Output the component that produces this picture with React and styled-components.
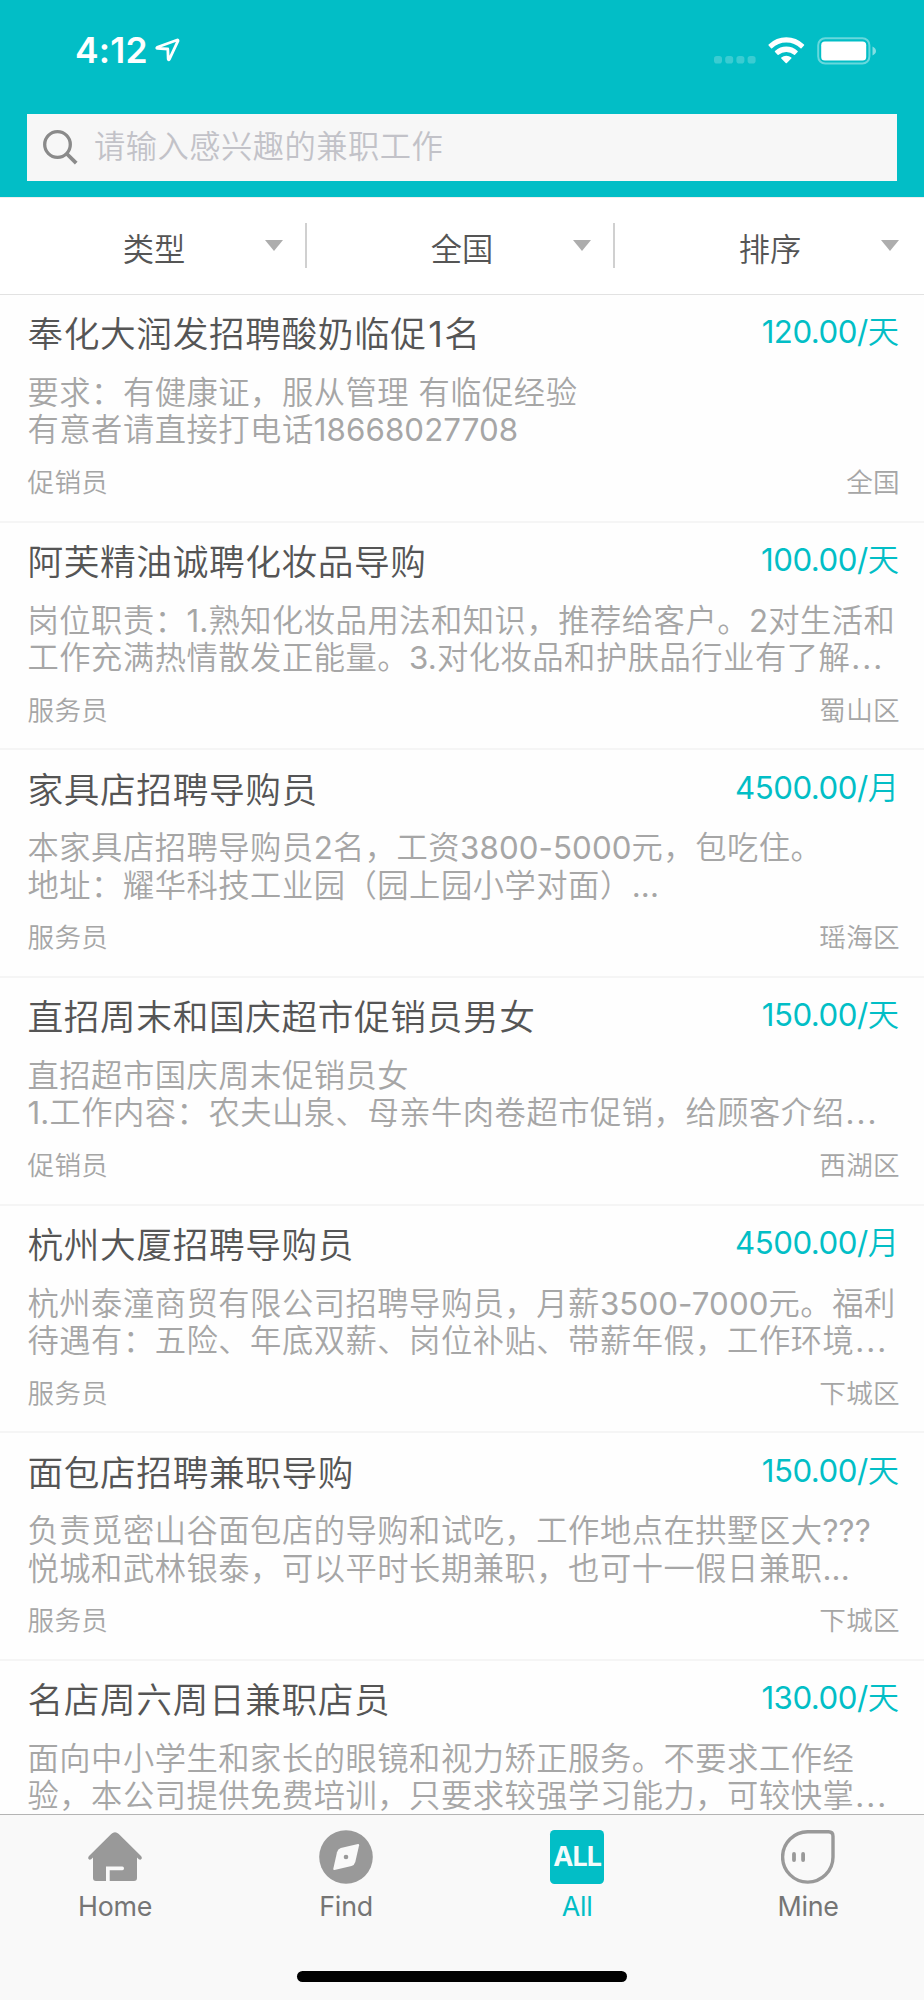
import React from "react";
import styled, { createGlobalStyle, ThemeProvider } from "styled-components";

const theme = {
  color: {
    primary: "#02bec6",
    title: "#555555",
    text: "#a6a6a6",
    tab: "#757575",
    placeholder: "#c2c2c8",
  },
};

const filters = ["类型", "全国", "排序"];

const jobs = [
  {
    title: "奉化大润发招聘酸奶临促1名",
    price: "120.00/天",
    lines: ["要求：有健康证，服从管理 有临促经验", "有意者请直接打电话18668027708"],
    type: "促销员",
    area: "全国",
  },
  {
    title: "阿芙精油诚聘化妆品导购",
    price: "100.00/天",
    lines: [
      "岗位职责：1.熟知化妆品用法和知识，推荐给客户。2对生活和",
      "工作充满热情散发正能量。3.对化妆品和护肤品行业有了解…",
    ],
    type: "服务员",
    area: "蜀山区",
  },
  {
    title: "家具店招聘导购员",
    price: "4500.00/月",
    lines: [
      "本家具店招聘导购员2名，工资3800-5000元，包吃住。",
      "地址：耀华科技工业园（园上园小学对面）...",
    ],
    type: "服务员",
    area: "瑶海区",
  },
  {
    title: "直招周末和国庆超市促销员男女",
    price: "150.00/天",
    lines: [
      "直招超市国庆周末促销员女",
      "1.工作内容：农夫山泉、母亲牛肉卷超市促销，给顾客介绍…",
    ],
    type: "促销员",
    area: "西湖区",
  },
  {
    title: "杭州大厦招聘导购员",
    price: "4500.00/月",
    lines: [
      "杭州泰潼商贸有限公司招聘导购员，月薪3500-7000元。福利",
      "待遇有：五险、年底双薪、岗位补贴、带薪年假，工作环境…",
    ],
    type: "服务员",
    area: "下城区",
  },
  {
    title: "面包店招聘兼职导购",
    price: "150.00/天",
    lines: [
      "负责觅密山谷面包店的导购和试吃，工作地点在拱墅区大???",
      "悦城和武林银泰，可以平时长期兼职，也可十一假日兼职...",
    ],
    type: "服务员",
    area: "下城区",
  },
  {
    title: "名店周六周日兼职店员",
    price: "130.00/天",
    lines: [
      "面向中小学生和家长的眼镜和视力矫正服务。不要求工作经",
      "验，本公司提供免费培训，只要求较强学习能力，可较快掌…",
    ],
  },
];

// latin runs are spaced differently from the chinese text around them
const Mixed = ({ children }) =>
  children.split(/([0-9.?/-]+|…)/).map((part, i) => {
    if (part === "…") return <Ellipsis key={i}>...</Ellipsis>;
    return i % 2 ? <Latin key={i}>{part}</Latin> : part;
  });

const LocationIcon = () => (
  <svg width="25" height="26" viewBox="0 -1 25 26">
    <path
      d="M22.2 2 L2.2 9.3 Q1.2 10 2.4 10.4 L12.8 11 L13.2 21.2 Q13.6 22.6 14.3 21.3 L23 2.9 Q23.2 1.7 22.2 2 Z"
      fill="none"
      stroke="#fff"
      strokeWidth="2.8"
      strokeLinejoin="round"
    />
  </svg>
);

const SignalDots = () => (
  <svg width="42" height="8" viewBox="0 0 42 8" fill="#fff" opacity="0.22">
    <rect x="0" width="8" height="7.5" rx="2.8" />
    <rect x="11.2" width="8" height="7.5" rx="2.8" />
    <rect x="22.4" width="8" height="7.5" rx="2.8" />
    <rect x="33.6" width="8" height="7.5" rx="2.8" />
  </svg>
);

const WifiIcon = () => (
  <svg width="37" height="27" viewBox="0 0 37 27" fill="#fff">
    <path d="M.6 7.5 Q8.2 .3 18.3 .3 Q28.4 .3 36 7.5 Q36.5 8 36 8.5 L33.5 11.2 Q33 11.6 32.5 11.2 Q26.5 5.6 18.3 5.6 Q10.1 5.6 4.1 11.2 Q3.6 11.6 3.1 11.2 L.6 8.5 Q.1 8 .6 7.5 Z" />
    <path d="M7 14 Q12 9.6 18.3 9.6 Q24.6 9.6 29.6 14 Q30.1 14.5 29.6 15 L27 17.7 Q26.5 18.2 26 17.7 Q22.7 14.9 18.3 14.9 Q13.9 14.9 10.6 17.7 Q10.1 18.2 9.6 17.7 L7 15 Q6.5 14.5 7 14 Z" />
    <path d="M13.3 20.5 Q15.5 18.8 18.3 18.8 Q21.1 18.8 23.3 20.5 Q23.8 21 23.3 21.5 L18.9 26 Q18.3 26.6 17.7 26 L13.3 21.5 Q12.8 21 13.3 20.5 Z" />
  </svg>
);

const BatteryIcon = () => (
  <svg width="60" height="28" viewBox="0 0 60 28">
    <rect x="1.2" y="1.2" width="51.2" height="25.3" rx="7" fill="none" stroke="#fff" strokeOpacity="0.4" strokeWidth="2" />
    <rect x="4.2" y="4.6" width="45" height="19" rx="3.6" fill="#fff" />
    <path d="M55.5 9.4 Q59 11 59 14 Q59 17 55.5 18.4 Z" fill="#fff" fillOpacity="0.5" />
  </svg>
);

const SearchIcon = () => (
  <svg width="35" height="35" viewBox="0 0 35 35" fill="none" stroke="#8a8a8a">
    <circle cx="14.5" cy="14.5" r="12.8" strokeWidth="3.3" />
    <path d="M24 24 L33.2 33.2" strokeWidth="3.8" />
  </svg>
);

const HomeIcon = () => (
  <svg width="54" height="54" viewBox="0 0 54 54">
    <path
      d="M23.2 3.9 Q27 .8 30.8 3.9 L53 26 Q54.4 27.8 53.4 29 Q52.4 30.2 50.8 29.2 L49 27.6 V48 Q49 51 46 51 H21.7 V40.2 H34.4 Q36 40.2 36 38.4 Q36 36.6 34.4 36.6 H18 V51 H8 Q5 51 5 48 V27.6 L3.2 29.2 Q1.6 30.2 .6 29 Q-.4 27.8 1 26 Z"
      fill="#999"
    />
  </svg>
);

const FindIcon = () => (
  <svg width="54" height="54" viewBox="0 0 54 54">
    <circle cx="27" cy="27" r="26.8" fill="#999" />
    <path
      d="M39 14.1 Q40.3 14 40.1 15.3 L36.3 32 Q35.5 35 32.5 36 L15.5 40 Q14 40.2 14.3 38.8 L18 22.3 Q18.8 19 21.8 18 Z"
      fill="#f9f9f9"
    />
    <circle cx="27" cy="27" r="2.3" fill="#999" />
  </svg>
);

const MineIcon = () => (
  <svg width="54" height="54" viewBox="0 0 54 54" fill="none" stroke="#999">
    <path d="M27 1.7 H47.5 Q52 1.7 52 6.2 V27 A25.2 25.2 0 1 1 27 1.7 Z" strokeWidth="3.4" />
    <path d="M13 24 V30 M22.1 24 V30" strokeWidth="3.8" strokeLinecap="round" />
  </svg>
);

const App = () => (
  <ThemeProvider theme={theme}>
    <GlobalStyle />
    <Screen>
      <Header>
        <StatusBar>
          <Time>4:12</Time>
          <LocationIcon />
          <StatusIcons>
            <DotsWrapper>
              <SignalDots />
            </DotsWrapper>
            <WifiIcon />
            <BatteryIcon />
          </StatusIcons>
        </StatusBar>
        <SearchBox>
          <SearchIcon />
          <Placeholder>请输入感兴趣的兼职工作</Placeholder>
        </SearchBox>
      </Header>
      <FilterBar>
        {filters.map(name => (
          <Filter key={name}>
            <span>{name}</span>
            <Arrow />
          </Filter>
        ))}
      </FilterBar>
      <JobList>
        {jobs.map(job => (
          <Job key={job.title}>
            <JobHead>
              <Title><Mixed>{job.title}</Mixed></Title>
              <Price><Mixed>{job.price}</Mixed></Price>
            </JobHead>
            <Description>
              {job.lines.map(line => (
                <p key={line}><Mixed>{line}</Mixed></p>
              ))}
            </Description>
            {job.type && (
              <JobFoot>
                <span>{job.type}</span>
                <span>{job.area}</span>
              </JobFoot>
            )}
          </Job>
        ))}
      </JobList>
      <TabBar>
        <Tabs>
          <Tab>
            <HomeIcon />
            <TabLabel>Home</TabLabel>
          </Tab>
          <Tab>
            <FindIcon />
            <TabLabel>Find</TabLabel>
          </Tab>
          <Tab $active>
            <AllBadge>ALL</AllBadge>
            <TabLabel>All</TabLabel>
          </Tab>
          <Tab>
            <MineIcon />
            <TabLabel>Mine</TabLabel>
          </Tab>
        </Tabs>
        <HomeIndicator />
      </TabBar>
    </Screen>
  </ThemeProvider>
)

const GlobalStyle = createGlobalStyle`
  * {
    box-sizing: border-box;
  }
  body {
    margin: 0;
    font-family: Inter, "Noto Sans CJK SC", sans-serif;
    font-weight: 350;
    background-color: #fff;
  }
  p {
    margin: 0;
  }
  svg {
    display: block;
    flex-shrink: 0;
  }
`

const Screen = styled.div`
  width: 924px;
  height: 2000px;
  display: flex;
  flex-direction: column;
  overflow: hidden;
  background-color: #fefefe;
`

const Latin = styled.span`
  font-weight: 400;
  letter-spacing: 0.1px;
`

const Ellipsis = styled.span`
  margin-left: 1px;
  font-weight: 400;
  letter-spacing: 2px;
`

const Header = styled.header`
  height: 197px;
  flex-shrink: 0;
  background-color: ${props => props.theme.color.primary};
`

const StatusBar = styled.div`
  height: 114px;
  padding: 37px 47px 0 75px;
  display: flex;
  align-items: flex-start;
  color: #fff;
`

const Time = styled.span`
  width: 80px;
  font-size: 35.5px;
  font-weight: 600;
  line-height: 28px;
  letter-spacing: 0.2px;
`

const StatusIcons = styled.div`
  margin-left: auto;
  display: flex;
`

const DotsWrapper = styled.div`
  padding: 19px 12px 0 0;
  & + svg {
    margin-right: 12px;
  }
`

const SearchBox = styled.div`
  height: 67px;
  margin: 0 27px;
  padding: 0 16px;
  display: flex;
  align-items: center;
  background-color: #f7f7f7;
`

const Placeholder = styled.span`
  margin-left: 16px;
  font-size: 31.25px;
  letter-spacing: 0.5px;
  line-height: 40px;
  padding-bottom: 2px;
  color: ${props => props.theme.color.placeholder};
`

const FilterBar = styled.nav`
  height: 98px;
  flex-shrink: 0;
  display: grid;
  grid-template-columns: repeat(3, 1fr);
  border-top: 1px solid #eeeeee;
  border-bottom: 1px solid #e2e2e2;
  background-color: #fff;
`

const Filter = styled.div`
  height: 45px;
  margin: 25px 1px 0 0;
  padding-left: 3px;
  display: grid;
  grid-template-columns: 1fr auto 1fr;
  grid-template-rows: 45px;
  align-items: center;
  font-size: 31.25px;
  line-height: 45px;
  color: ${props => props.theme.color.title};
  border-right: 2px solid #d0d0d0;

  &:last-child {
    border-right-color: transparent;
  }
  span {
    grid-column: 2;
    padding-top: 9px;
  }
`

const Arrow = styled.i`
  justify-self: end;
  margin: -1px 22px 0 0;
  border: 9px solid transparent;
  border-top: 11px solid #adadad;
  border-bottom: 0;
`

const JobList = styled.main`
  flex: 1;
  min-height: 0;
  overflow: hidden;
`

const Job = styled.article`
  height: 227.66px;
  padding: 19.3px 25px 0 27.5px;
  border-bottom: 2px solid #f5f5f5;
`

const JobHead = styled.div`
  display: flex;
  justify-content: space-between;
`

const Title = styled.h2`
  margin: 0;
  font-size: 35.7px;
  font-weight: 350;
  line-height: 40px;
  letter-spacing: 0.6px;
  color: ${props => props.theme.color.title};

  ${Latin} {
    margin: 0 1.5px;
  }
`

const Price = styled.span`
  font-size: 31.25px;
  line-height: 36px;
  color: ${props => props.theme.color.primary};

  ${Latin} {
    letter-spacing: -0.5px;
  }
`

const Description = styled.div`
  margin-top: 20.7px;
  font-size: 31.25px;
  line-height: 37.3px;
  letter-spacing: 0.55px;
  white-space: nowrap;
  color: ${props => props.theme.color.text};
`

const JobFoot = styled.div`
  margin: 16.3px -1px 0 0;
  display: flex;
  justify-content: space-between;
  font-size: 26.6px;
  line-height: 32px;
  letter-spacing: 0.3px;
  color: ${props => props.theme.color.text};
`

const TabBar = styled.footer`
  height: 186px;
  flex-shrink: 0;
  display: flex;
  flex-direction: column;
  align-items: center;
  border-top: 1px solid #b4b4b4;
  background-color: #f9f9f9;
`

const Tabs = styled.div`
  width: 100%;
  height: 156px;
  padding-top: 15px;
  display: grid;
  grid-template-columns: repeat(4, 1fr);
`

const Tab = styled.div`
  padding-right: 0.8px;
  display: flex;
  flex-direction: column;
  align-items: center;
  color: ${props => props.$active ? props.theme.color.primary : props.theme.color.tab};
`

const TabLabel = styled.span`
  margin-top: 6px;
  font-size: 26.8px;
  font-weight: 400;
  line-height: 32px;
  letter-spacing: -0.2px;
`

const AllBadge = styled.div`
  width: 54px;
  height: 54px;
  border-radius: 4.5px;
  font-size: 27px;
  font-weight: 700;
  line-height: 53px;
  letter-spacing: -1px;
  text-align: center;
  color: #f4fbfb;
  background-color: ${props => props.theme.color.primary};
`

const HomeIndicator = styled.div`
  width: 330px;
  height: 11px;
  border-radius: 6px;
  background-color: #000;
`

export default App
